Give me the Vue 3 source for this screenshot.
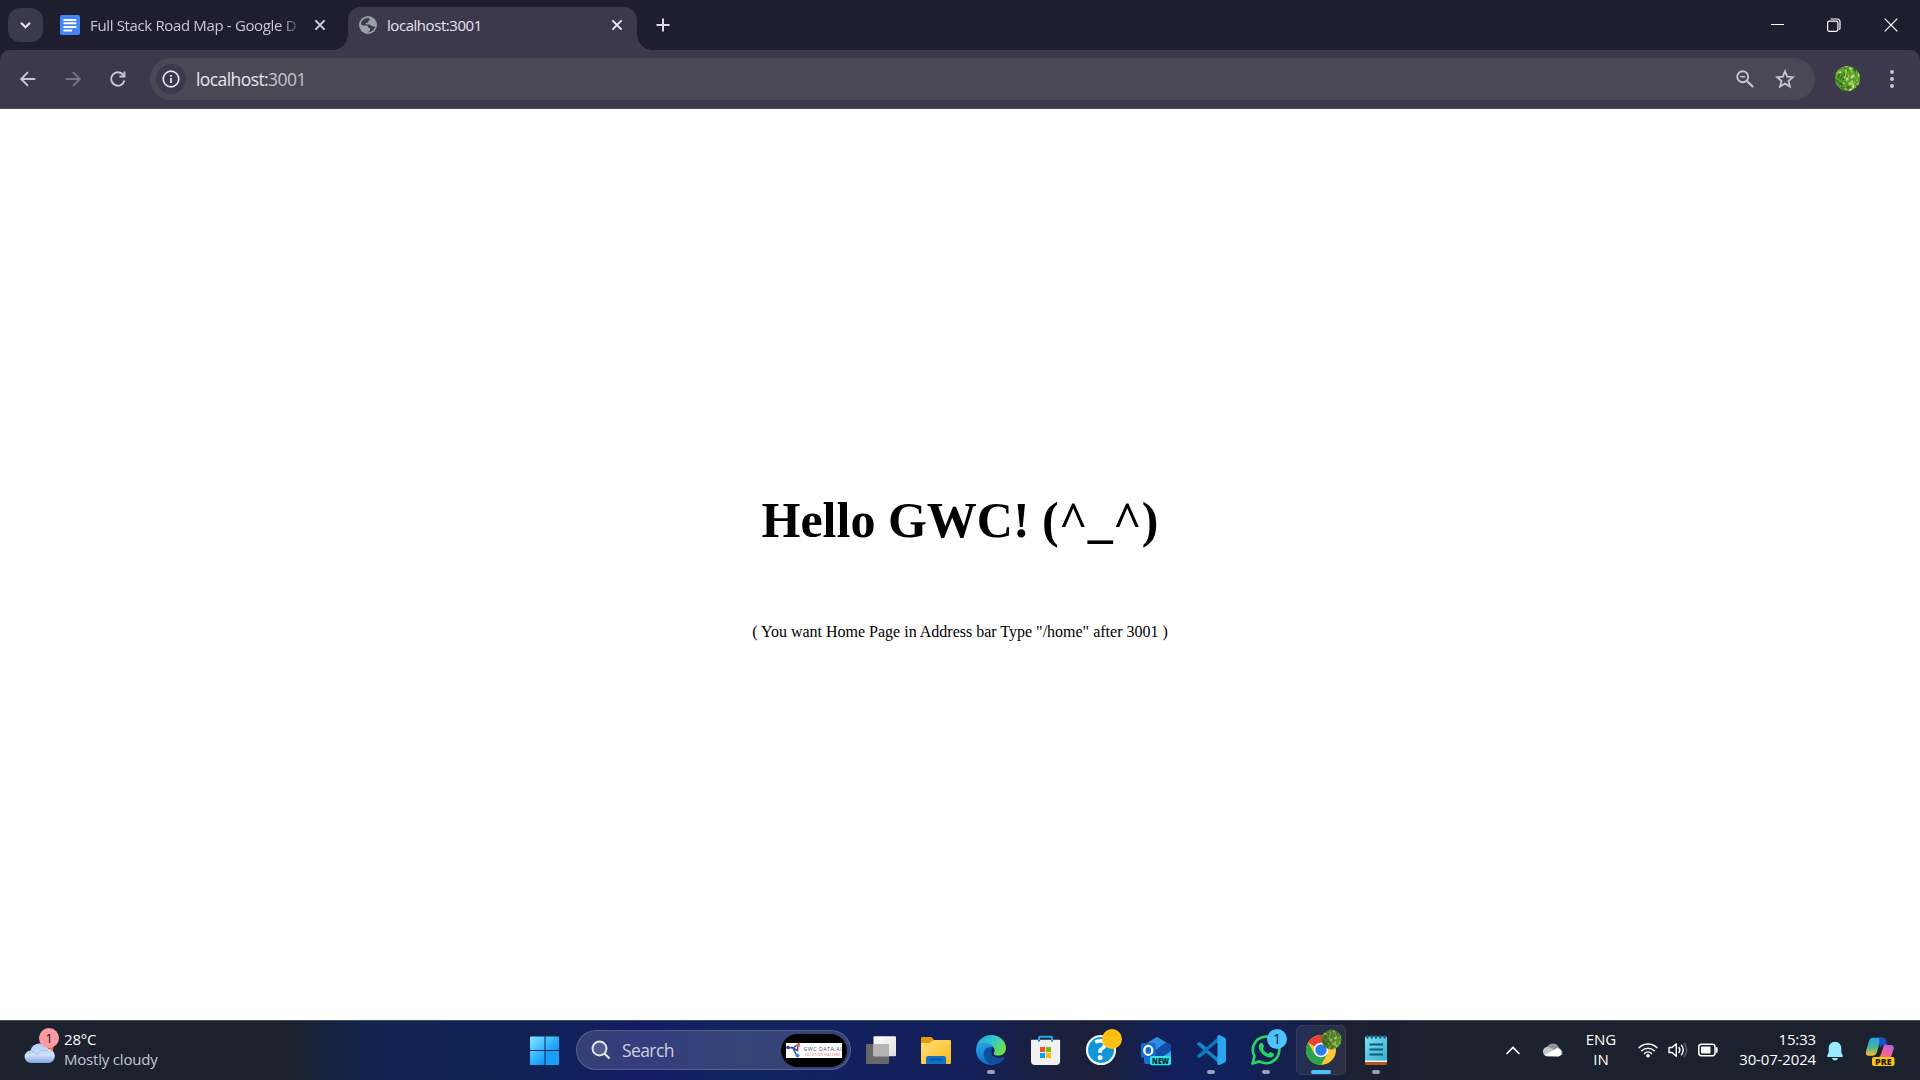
<script setup>
// Deterministic foliage used by the profile picture and its taskbar badge
const leaves = []
let seed = 7
const rnd = () => (seed = (seed * 16807) % 2147483647) / 2147483647
const greens = ['#4d8f22', '#6fae35', '#a9d65c', '#2a5a18', '#cfe88a', '#5b9e2a', '#397020', '#8cc648']
for (let i = 0; i < 150; i++) {
  leaves.push({
    x: rnd() * 24,
    y: rnd() * 24,
    rx: 0.9 + rnd() * 1.3,
    ry: 0.5 + rnd() * 0.7,
    a: rnd() * 180,
    c: greens[Math.floor(rnd() * 8)]
  })
}
</script>

<template>
  <div class="screen">
    <header class="tabstrip">
      <button class="tab-search">
        <svg width="35" height="34" viewBox="0 0 35 34"><path d="M13 14.8l4.5 4.5 4.5-4.5" fill="none" stroke="#e5e1f2" stroke-width="2.2" /></svg>
      </button>
      <div class="tab idle">
        <svg width="20" height="20" viewBox="0 0 20 20"><rect width="20" height="20" rx="1.8" fill="#4285f4" /><path d="M3.5 5h12.8M3.5 8.3h12.8M3.5 11.9h12.8M3.5 15.5h8.5" stroke="#fff" stroke-width="2" /></svg>
        <span class="title faded">Full Stack Road Map - Google D</span>
        <svg class="x" width="12" height="12" viewBox="0 0 12 12"><path d="M1.4 1.4l9.2 9.2M10.6 1.4l-9.2 9.2" stroke="#dcd8ea" stroke-width="1.8" /></svg>
      </div>
      <div class="tab active">
        <svg width="18" height="18" viewBox="0 0 18 18"><circle cx="9" cy="9" r="9" fill="#9aa0a6" /><path d="M10 2C6 1.500 2.200 4.500 1.900 8.500l3.200 1.300h3.300c.9.200.8 1.300.8 2.200H11v2.200c0 .8-.6 1.200-1.500 1.300L9.300 16.200c3.500 0 6.200-2.400 6.800-5.600l-3.300-.4c-1.200-.2-1.300-1.500-2.300-1.600H7.300c-.9-.1-.9-1.700 0-1.800h1.900V5.400c.1-1 1-1 1.800-1.100z" fill="#3c394d" /><path d="M2 9.200l3 .6h2.800q1 .1 1 2.200l.2 4C5 16 2 13 2 9.200z" fill="#9aa0a6" /></svg>
        <span class="title">localhost:3001</span>
        <svg class="x" width="12" height="12" viewBox="0 0 12 12"><path d="M1.400 1.400l9.200 9.200M10.600 1.400l-9.200 9.200" stroke="#f0edf8" stroke-width="1.900" /></svg>
      </div>
      <svg class="plus" width="14" height="14" viewBox="0 0 14 14"><path d="M7 .5v13M.5 7h13" stroke="#dcd8ea" stroke-width="2" /></svg>
      <div class="controls">
        <svg width="13" height="14" viewBox="0 0 13 14"><path d="M0 6.500h13" stroke="#fff" stroke-width="1" /></svg>
        <svg width="14" height="14" viewBox="0 0 14 14"><path d="M3.500 1h6.500q3 0 3 3v6.500q0 .9-1 1" fill="none" stroke="#fff" stroke-width="1.200" /><rect x=".6" y="3.100" width="10.300" height="10.300" rx="1.800" fill="none" stroke="#fff" stroke-width="1.200" /></svg>
        <svg width="14" height="14" viewBox="0 0 14 14"><path d="M.7.7l12.600 12.600M13.300.7L.7 13.300" stroke="#fff" stroke-width="1.200" /></svg>
      </div>
    </header>

    <div class="toolbar-wrap">
      <nav class="toolbar">
        <svg class="nav" width="20" height="20" viewBox="0 0 20 20"><path d="M17.300 10H3.500M10 3.200L3.200 10l6.800 6.800" fill="none" stroke="#c9c3dc" stroke-width="1.900" /></svg>
        <svg class="nav" width="20" height="20" viewBox="0 0 20 20"><path d="M2.700 10h13.800M10 3.200l6.800 6.800-6.800 6.800" fill="none" stroke="#77738a" stroke-width="1.900" /></svg>
        <svg class="nav" width="20" height="20" viewBox="0 0 20 20"><path d="M16.400 11.500A6.700 6.700 0 1 1 15.300 6l1.300 1.500" fill="none" stroke="#c9c3dc" stroke-width="1.900" /><path d="M17.400 2.500v6h-6V6.600h4.100V2.500z" fill="#c9c3dc" /></svg>
        <div class="omnibox">
          <span class="info"><svg width="18" height="18" viewBox="0 0 18 18"><circle cx="9" cy="9" r="7.800" fill="none" stroke="#e5e1f2" stroke-width="1.700" /><path d="M9 8v5M9 5v1.800" stroke="#e5e1f2" stroke-width="1.800" /></svg></span>
          <span class="url">localhost:<i>3001</i></span>
          <svg class="mag" width="18" height="18" viewBox="0 0 18 18"><circle cx="6.700" cy="6.700" r="5.500" fill="none" stroke="#c9c5d2" stroke-width="1.900" /><path d="M10.900 10.900l6.200 6.200" stroke="#c9c5d2" stroke-width="2.100" /><path d="M4.200 6.700h5" stroke="#c9c5d2" stroke-width="1.500" /></svg>
          <svg width="20" height="20" viewBox="0 0 20 20"><path d="M10 2.400l2.200 5.300 5.700.5-4.300 3.700 1.300 5.600-4.900-3-4.900 3 1.300-5.600L2.100 8.200l5.700-.5z" fill="none" stroke="#c9c5d2" stroke-width="1.800" /></svg>
        </div>
        <svg class="avatar" width="25" height="25" viewBox="0 0 24 24"><rect width="24" height="24" fill="#5f9c30" /><ellipse v-for="(l, i) in leaves" :key="i" :cx="l.x" :cy="l.y" :rx="l.rx" :ry="l.ry" :fill="l.c" :transform="`rotate(${l.a} ${l.x} ${l.y})`" /></svg>
        <svg class="dots" width="6" height="20" viewBox="0 0 6 20"><g fill="#c9c3dc"><circle cx="3" cy="3" r="2" /><circle cx="3" cy="10" r="2" /><circle cx="3" cy="17" r="2" /></g></svg>
      </nav>
    </div>

    <main class="page">
      <h1>Hello GWC! (^_^)</h1>
      <p>( You want Home Page in Address bar Type "/home" after 3001 )</p>
    </main>

    <footer class="taskbar">
      <div class="weather">
        <svg width="40" height="60" viewBox="0 0 40 60">
          <defs><linearGradient id="cl" x1="0" y1="0" x2="0" y2="1"><stop offset="0" stop-color="#b3cdf7" /><stop offset=".6" stop-color="#cfe0fb" /><stop offset="1" stop-color="#7ea3e6" /></linearGradient></defs>
          <circle cx="27" cy="27.500" r="6.500" fill="#e8751a" />
          <path d="M11 43a6.200 6.200 0 0 1-.4-12.400 9.300 9.300 0 0 1 17.600-1.500A7 7 0 0 1 29 43z" fill="url(#cl)" />
          <path d="M8 34c3-3.500 7-3 9 .5 3-5 8-5 11-3" fill="none" stroke="#8fb0ea" stroke-width="1" opacity=".6" />
          <circle cx="29" cy="18" r="10" fill="#ff99a4" />
          <text x="29" y="23" text-anchor="middle" font-size="13.500" fill="#1c1a22">1</text>
        </svg>
        <div class="two-line"><span>28°C</span><span class="dim">Mostly cloudy</span></div>
      </div>

      <div class="apps">
        <svg class="cell" viewBox="0 0 55 60">
          <defs><linearGradient id="wn" x1="0" y1="0" x2="1" y2="1"><stop offset="0" stop-color="#8be3ff" /><stop offset="1" stop-color="#29b4fb" /></linearGradient><linearGradient id="wn2" x1="0" y1="0" x2="1" y2="1"><stop offset="0" stop-color="#4fcdfc" /><stop offset="1" stop-color="#0f94f8" /></linearGradient></defs>
          <path d="M14 16.500h13.500V30H13V17.500q0-1 1-1z" fill="url(#wn)" /><path d="M28.500 16.500H41q1 0 1 1V30H28.500z" fill="url(#wn2)" /><path d="M13 31h14.500v14H14q-1 0-1-1z" fill="url(#wn2)" /><path d="M28.500 31H42v13q0 1-1 1H28.500z" fill="#189ffa" />
        </svg>
        <div class="search">
          <svg width="20" height="20" viewBox="0 0 20 20"><circle cx="8.500" cy="8.500" r="7" fill="#8f97b8" fill-opacity=".35" stroke="#e4e6ee" stroke-width="1.900" /><path d="M13.500 13.500l5 5" stroke="#e4e6ee" stroke-width="2.200" /></svg>
          <span>Search</span>
          <svg class="promo" width="66" height="33" viewBox="0 0 66 33">
            <rect width="66" height="33" rx="16.500" fill="#000" /><rect x="5" y="9" width="56" height="15" fill="#fff" />
            <path d="M6 13.500l6 .5 5-3.500-.5 6-4.500-2.500 4 8" fill="none" stroke="#41469a" stroke-width="1.500" /><circle cx="7" cy="13.500" r="1.800" fill="#4a2b7c" /><circle cx="17.500" cy="11" r="1.900" fill="#e36a5c" /><circle cx="16.500" cy="21.500" r="2" fill="#3d8ddb" />
            <text x="22.500" y="16.700" font-size="5.300" textLength="38" fill="#4c4a78">GWC DATA.AI</text><text x="24" y="21.500" font-size="3.200" font-weight="600" textLength="35" fill="#ef9183">SOLUTION MATTERS</text>
          </svg>
        </div>
        <svg class="cell" viewBox="0 0 55 60">
          <defs><linearGradient id="tv" x1="0" y1="0" x2="1" y2="1"><stop offset="0" stop-color="#fff" /><stop offset="1" stop-color="#dcdde0" /></linearGradient></defs>
          <rect x="13" y="24" width="23" height="20" rx="1" fill="#686868" /><rect x="20.500" y="16.300" width="22.500" height="20" rx="1" fill="url(#tv)" /><path d="M20.500 24H36v12.300H21.500q-1 0-1-1z" fill="#b4b4b4" />
        </svg>
        <svg class="cell" viewBox="0 0 55 60">
          <defs><linearGradient id="fd" x1="0" y1="0" x2="1" y2="1"><stop offset="0" stop-color="#ffe07a" /><stop offset="1" stop-color="#fbb91b" /></linearGradient></defs>
          <path d="M13 18q0-1 1-1h9.500l3 3.500L23 26H13z" fill="#e09c0a" /><path d="M13 23h8.500l4.500-3h16q1 0 1 1v22q0 1-1 1H14q-1 0-1-1z" fill="url(#fd)" /><path d="M18 44v-6q0-2 2-2h16q2 0 2 2v6z" fill="#1272c4" /><path d="M21.500 39.500h13" stroke="#0a4a94" stroke-width="1.300" />
        </svg>
        <svg class="cell" viewBox="0 0 55 60">
          <defs>
            <linearGradient id="e1" x1="0" y1="0" x2="1" y2=".5"><stop offset="0" stop-color="#1c9fe0" /><stop offset=".55" stop-color="#34c6d0" /><stop offset="1" stop-color="#6be04a" /></linearGradient>
            <linearGradient id="e2" x1="0" y1="0" x2=".4" y2="1"><stop offset="0" stop-color="#2aa7e6" /><stop offset="1" stop-color="#0a6fd0" /></linearGradient>
          </defs>
          <path d="M13.300 28C14 20.500 20.500 15 28 15c8.500 0 15 6 15 13 0 5-3.500 7.500-7.500 7.500-3.500 0-5.500-1.200-4.500-2.600 1.200-2 .8-4.800-1.500-6.700C25 22.500 16 22.500 13.300 28z" fill="url(#e1)" />
          <path d="M13 30c0-4.500 4-6.800 8.500-6.800 4.300 0 8 2 9.200 4.500-4.500-1.700-8.700 2.300-7.200 8 1 4.500 5 8 8.500 8.600C22 47 13 39.500 13 30z" fill="url(#e2)" />
          <path d="M24 27.800c-3.500 2.700-4.500 7.700-1.600 12 3.600 5.300 10.600 6.200 16 2.200 1.700-1.400 2.900-2.800 3.500-4.400.3-.8-.3-1-.9-.7-6 2.700-12.300.2-12.700-4.600-.1-1.500.4-3 1.500-4-2-1.300-4.200-1.500-5.800-.5z" fill="#114f9c" />
          <rect x="24" y="50" width="8" height="4" rx="2" class="run" />
        </svg>
        <svg class="cell" viewBox="0 0 55 60">
          <path d="M21 22v-4q0-1.300 1.300-1.300h10.500q1.300 0 1.300 1.300v4" fill="none" stroke="#20a9ef" stroke-width="2" /><path d="M13 20.500q0-.8.800-.8h27.500q.8 0 .8.800V41q0 4-4 4H17q-4 0-4-4z" fill="#f1f1f2" /><path d="M21 19.700v1.800M34 19.700v1.800" stroke="#1679c5" stroke-width="2" />
          <path fill="#f25022" d="M22 27h5v5h-5z" /><path fill="#7fba00" d="M28 27h5v5h-5z" /><path fill="#00a4ef" d="M22 33h5v5h-5z" /><path fill="#ffb900" d="M28 33h5v5h-5z" />
        </svg>
        <svg class="cell" viewBox="0 0 55 60">
          <circle cx="28" cy="30" r="14" fill="#0f96d8" stroke="#eef4f8" stroke-width="2.200" /><text x="28" y="40" text-anchor="middle" font-size="28" font-weight="700" fill="#fff">?</text><circle cx="39" cy="19" r="10" fill="#ffc014" />
        </svg>
        <svg class="cell" viewBox="0 0 55 60">
          <path d="M16 25l13-8 14 8v17q0 2-2 2H18q-2 0-2-2z" fill="#1a6fcb" /><path d="M20 22.500l9-5.500 9 5.500-10 7z" fill="#2f8fdf" /><path d="M43 25v8L27 41l1-11 10-7.500z" fill="#0f4fa8" /><path d="M43 31v12H26z" fill="#37b0f0" /><rect x="13" y="23" width="14.700" height="14.700" rx="1.500" fill="#0f6cd0" />
          <ellipse cx="20.300" cy="30.400" rx="4" ry="4.500" fill="none" stroke="#fff" stroke-width="2.300" /><rect x="22" y="36" width="21" height="9.300" rx="2" fill="#2ee6ee" /><text x="32.600" y="43.700" text-anchor="middle" font-size="8.500" font-weight="800" textLength="17" lengthAdjust="spacingAndGlyphs" fill="#08222c">NEW</text>
        </svg>
        <svg class="cell" viewBox="0 0 55 60">
          <path d="M13.500 24l2-1.700q.7-.5 1.500 0L37 38v6.500z" fill="#1684cf" /><path d="M13.500 36l2 1.800q.7.500 1.500 0L37 22v-6.500z" fill="#0f75bd" /><path d="M35 15.300q1-.5 2 0l5 2.400q1 .5 1 1.600v21.400q0 1.100-1 1.600l-5 2.400q-1 .5-2 0-.7-.4-.7-1.300V16.600q0-.9.700-1.300z" fill="#2aa5f0" /><path d="M34.300 22.500v15L25 30z" fill="#12235a" />
          <rect x="24" y="50" width="8" height="4" rx="2" class="run" />
        </svg>
        <svg class="cell" viewBox="0 0 55 60">
          <path d="M14.500 43.500l2-7.200a13.200 13.200 0 1 1 5 5.100z" fill="none" stroke="#25d366" stroke-width="2.700" stroke-linejoin="round" /><path d="M22.500 23.200c.7-.7 1.800-.7 2.300.2l1.300 3c.2.700-1.400 1.900-1.100 2.500 1.300 2.400 3 3.900 5.300 4.800.7.200 1.500-1.900 2.300-1.600l2.900 1.400c.8.500.4 1.900-.2 2.700-1.400 1.600-4 1.700-6.600.6-3.500-1.500-5.500-3.800-7.200-6.800-1.200-2.400-.9-5 1-6.800z" fill="#25d366" />
          <circle cx="39" cy="19" r="10" fill="#4cc2ff" /><text x="39" y="24" text-anchor="middle" font-size="14" fill="#10202c">1</text>
          <rect x="24" y="50" width="8" height="4" rx="2" class="run" />
        </svg>
        <svg class="cell" viewBox="0 0 55 60">
          <defs><clipPath id="av"><circle cx="38.500" cy="19.500" r="10" /></clipPath></defs>
          <rect x="3.500" y="5.500" width="49" height="49" rx="5" fill="#fff" fill-opacity=".07" stroke="#fff" stroke-opacity=".1" />
          <circle cx="28" cy="30" r="15" fill="#fcc934" /><path d="M28 30L15 22.500A15 15 0 0 1 41 22.500H28z" fill="#ea4335" /><path d="M15 22.500A15 15 0 0 0 28 45l6.500-11.300L28 30 21.500 33.700z" fill="#2ba24c" />
          <circle cx="28" cy="30" r="7.300" fill="#fff" /><circle cx="28" cy="30" r="5.700" fill="#2b7de9" />
          <g clip-path="url(#av)"><rect x="28" y="9" width="21" height="21" fill="#4c6b2c" /><ellipse v-for="(l, i) in leaves" :key="i" :cx="28 + l.x * 0.87" :cy="9 + l.y * 0.87" :rx="l.rx" :ry="l.ry" :fill="l.c" opacity=".5" :transform="`rotate(${l.a} ${28 + l.x * 0.87} ${9 + l.y * 0.87})`" /></g>
          <rect x="18" y="50" width="20" height="4" rx="2" fill="#4cc2ff" />
        </svg>
        <svg class="cell" viewBox="0 0 55 60">
          <defs><linearGradient id="np" x1="0" y1="0" x2="1" y2="1"><stop offset="0" stop-color="#7de0f2" /><stop offset="1" stop-color="#35aed2" /></linearGradient></defs>
          <rect x="17" y="38" width="22" height="7" rx="1.500" fill="#b0581c" /><path d="M17 40h22v2H17z" fill="#f2f2f2" /><rect x="17" y="16.500" width="22" height="24" rx="1" fill="url(#np)" />
          <path d="M21.500 24.500h13.500M21.500 29.500h13.500M21.500 34.500h13.500" stroke="#0e5878" stroke-width="1.900" /><path d="M19.500 15v3.500M23.700 15v3.500M28 15v3.500M32.300 15v3.500M36.500 15v3.500" stroke="#10557a" stroke-width="2" />
          <rect x="24" y="50" width="8" height="4" rx="2" class="run" />
        </svg>
      </div>

      <div class="tray">
        <svg class="up" width="14" height="9" viewBox="0 0 14 9"><path d="M1 7.500l6-6 6 6" fill="none" stroke="#fff" stroke-width="1.700" stroke-linecap="round" /></svg>
        <svg class="cloud" width="20" height="14" viewBox="0 0 20 14"><path d="M4 4.500A6.500 6.500 0 0 1 16 4.500L20 9 10 12 1 9z" fill="#8e9196" /><path d="M0 8.800A4.500 4.500 0 0 1 7 4.700L20 11 16 13.300H4.500A4.400 4.400 0 0 1 0 8.800z" fill="#c4c6ca" /><path d="M1.500 12L13.500 5.500a4.300 4.300 0 0 1 2.500 7.800H4.500q-1.800 0-3-1.300z" fill="#fff" /><path d="M13 5.500a4 4 0 1 1 2.800 7.800H11z" fill="#fff" /></svg>
        <div class="lang"><span>ENG</span><span>IN</span></div>
        <svg class="wifi" width="20" height="16" viewBox="0 0 20 16"><g fill="none" stroke="#fff" stroke-width="1.500" stroke-linecap="round"><path d="M1 5.800a12.700 12.700 0 0 1 18 0M3.800 8.700a8.800 8.800 0 0 1 12.400 0M6.500 11.500a5 5 0 0 1 7 0" /></g><circle cx="10" cy="13.800" r="1.800" fill="#fff" /></svg>
        <svg class="vol" width="21" height="16" viewBox="0 0 21 16"><g fill="none" stroke="#fff" stroke-width="1.400" stroke-linecap="round" stroke-linejoin="round"><path d="M1 5.500h3L8.300 1.700v12.600L4 10.500H1z" /><path d="M11 5.500q1.800 2.500 0 5M13.500 3.300q3.600 4.700 0 9.400" /><path d="M16.300 1.500q4.800 6.500 0 13" stroke-opacity=".3" /></g></svg>
        <svg class="bat" width="20" height="14" viewBox="0 0 20 14"><rect x=".8" y="1.300" width="16.200" height="11.400" rx="2.600" fill="none" stroke="#fff" stroke-width="1.500" /><rect x="3" y="3.500" width="9.500" height="7" rx=".8" fill="#fff" /><path d="M18.700 5v4" stroke="#fff" stroke-width="1.800" stroke-linecap="round" /></svg>
        <div class="clock"><span>15:33</span><span>30-07-2024</span></div>
        <svg class="bell" width="18" height="20" viewBox="0 0 18 20"><path d="M9 .8c4 0 6.300 3 6.300 6.500v4l1.500 3.400q.4 1.300-1 1.300H2.200q-1.400 0-1-1.300l1.500-3.400v-4C2.700 3.800 5 .8 9 .8zM5.800 17h6.400q-1 2.500-3.200 2.500T5.800 17z" fill="#99ebff" /></svg>
        <svg class="pilot" width="30" height="29" viewBox="0 0 30 29">
          <defs>
            <linearGradient id="c1" x1="0" y1="0" x2="0" y2="1"><stop offset="0" stop-color="#1fa6ee" /><stop offset=".5" stop-color="#45b39a" /><stop offset="1" stop-color="#f2c32c" /></linearGradient>
            <linearGradient id="c2" x1="1" y1="0" x2="0" y2="1"><stop offset="0" stop-color="#a964ee" /><stop offset=".5" stop-color="#ef5fa0" /><stop offset="1" stop-color="#f88a4a" /></linearGradient>
          </defs>
          <path d="M7.500.8H19q-3 .5-4 4l-3 10q-1 4-5 4H3.500Q0 18.800 1 14l3-10Q5 .8 7.500.8z" fill="url(#c1)" /><path d="M14 .8h4q2.500 0 3.300 3L22.500 8H19q-3 0-4 3z" fill="#1c50c8" /><path d="M19 8h6.500q4 0 3.200 4l-3 9H12q3-.5 4-4l2-6q.5-3 1-3z" fill="url(#c2)" />
          <rect x="7" y="20" width="22.500" height="9" rx="2" fill="#ffc516" /><text x="18.300" y="27.700" text-anchor="middle" font-size="8.800" font-weight="800" textLength="16.500" lengthAdjust="spacingAndGlyphs" fill="#2a2106">PRE</text>
        </svg>
      </div>
    </footer>
  </div>
</template>

<style>
body { margin: 0; background: #fff; overflow: hidden; }
</style>

<style scoped>
.screen { width: 1920px; height: 1080px; display: flex; flex-direction: column; overflow: hidden; font-family: "Open Sans", "Noto Sans", sans-serif; }
svg { display: block; flex: none; }
.tabstrip { height: 50px; flex: none; background: #1f1e2f; display: flex; align-items: flex-start; box-sizing: border-box; padding-left: 8px; }
.tab-search { border: 0; padding: 0; width: 35px; height: 34px; margin-top: 8px; border-radius: 12px; background: #3b394c; }
.tab { display: flex; align-items: center; box-sizing: border-box; font-size: 15px; letter-spacing: -0.45px; color: #cbc6dc; white-space: nowrap; }
.idle { width: 305px; height: 50px; padding: 0 22px 0 17px; letter-spacing: -0.35px; }
.title { margin-left: 10px; flex: 1; }
.faded { flex: none; width: 212px; margin-right: 12px; mask-image: linear-gradient(90deg, #000 192px, transparent 212px); }
.active { position: relative; width: 289px; height: 43px; margin-top: 7px; padding: 0 14px 7px 11px; border-radius: 13px 13px 0 0; background: #3c394d; color: #e8e4f2; }
.active::before, .active::after { content: ""; position: absolute; bottom: 0; width: 15px; height: 15px; }
.active::before { left: -15px; background: radial-gradient(circle at 0 0, transparent 14.5px, #3c394d 15px); }
.active::after { right: -15px; background: radial-gradient(circle at 100% 0, transparent 14.5px, #3c394d 15px); }
.plus { margin: 18px 0 0 19px; }
.controls { margin: 18px 22px 0 auto; display: flex; gap: 43px; }
.toolbar-wrap { background: #1f1e2f; flex: none; }
.toolbar { height: 59px; box-sizing: border-box; border-bottom: 1px solid #55505c; border-radius: 10px 10px 0 0; background: #3c394d; display: flex; align-items: center; padding: 0 25px 0 17.5px; }
.nav { margin-right: 25px; }
.omnibox { width: 1665px; height: 42px; margin-left: -2.5px; border-radius: 21px; background: #494854; display: flex; align-items: center; box-sizing: border-box; padding: 0 20px 0 6px; }
.info { width: 30px; height: 30px; border-radius: 50%; background: #3c394d; display: grid; place-items: center; }
.url { margin-left: 10px; font-size: 17.5px; letter-spacing: -0.58px; color: #e8e5ee; }
.url i { font-style: normal; color: #c6c2d0; }
.mag { margin-left: auto; margin-right: 21px; }
.avatar { margin: 0 0 1px 20px; border-radius: 50%; }
.dots { margin-left: auto; }
.page { height: 911px; flex: none; background: #fff; color: #000; font-family: "Liberation Serif", serif; display: flex; flex-direction: column; align-items: center; box-sizing: border-box; padding-top: 381px; }
h1 { margin: 0; font-size: 50px; line-height: 60px; font-weight: 700; white-space: nowrap; }
p { margin: 72px 0 0; font-size: 16px; line-height: 20px; white-space: nowrap; }
.taskbar { height: 60px; flex: none; box-sizing: border-box; display: flex; color: #fff; font-size: 15px; background: linear-gradient(90deg, #1b222e 0, #1b222e 290px, #12234f 370px, #11225a 560px, #131b66 640px, #112460 740px, #12205f 850px, #131f58 970px, #1b203e 1050px, #1b1f38 1100px, #12205a 1160px, #10215c 1230px, #151f48 1300px, #1b2033 1350px, #1b212d 1420px); box-shadow: inset 0 1px #45505e; }
.weather { width: 517px; display: flex; padding-left: 20px; box-sizing: border-box; }
.two-line, .lang, .clock { display: flex; flex-direction: column; line-height: 20px; padding-top: 9px; white-space: nowrap; }
.two-line { margin-left: 4px; letter-spacing: -0.2px; }
.dim { color: #c3c7cd; }
.apps { display: flex; }
.cell { width: 55px; height: 60px; }
.run { fill: #9aa0b8; }
.search { width: 275px; height: 40px; margin: 10px 2px 0 4px; box-sizing: border-box; border: 1px solid rgba(255, 255, 255, .17); border-radius: 20px; background: rgba(255, 255, 255, .15); display: flex; align-items: center; padding: 0 3px 0 14px; font-size: 17.5px; letter-spacing: -0.6px; color: #cdd1e2; }
.search span { margin-left: 11px; }
.promo { margin-left: auto; letter-spacing: 0; }
.tray { display: flex; margin-left: 103px; }
.up { margin-top: 26px; }
.cloud { margin: 22.5px 0 0 23px; }
.lang { width: 40px; margin-left: 18px; text-align: center; }
.wifi { margin: 21.5px 0 0 17px; }
.vol { margin: 22px 0 0 10px; }
.bat { margin: 23px 0 0 9px; }
.clock { width: 98px; text-align: right; letter-spacing: -0.15px; }
.bell { margin: 21px 0 0 10px; }
.pilot { margin: 16.5px 0 0 20.5px; }
</style>
